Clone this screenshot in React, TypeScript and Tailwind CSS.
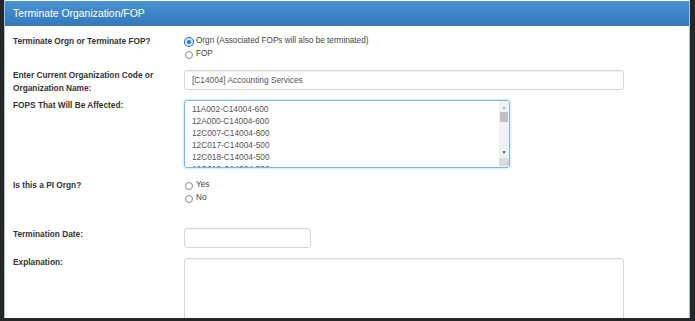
import React from "react";

const FOPS = [
  "11A002-C14004-600",
  "12A000-C14004-600",
  "12C007-C14004-600",
  "12C017-C14004-500",
  "12C018-C14004-500",
  "12C019-C14004-500",
];

function Radio({ checked, label }: { checked?: boolean; label: string }) {
  return (
    <div className="flex h-[13px] items-center gap-[3px] text-[8.2px] text-[#444]">
      {checked ? (
        <span className="box-border size-[8px] rounded-full border-[2px] border-[#d6e6f7] bg-[#1a73d9] ring-1 ring-[#1a73d9]" />
      ) : (
        <span className="box-border size-[8px] rounded-full border border-[#8a8a8a] bg-white" />
      )}
      <span>{label}</span>
    </div>
  );
}

function Label({ children, className = "" }: { children: React.ReactNode; className?: string }) {
  return (
    <div className={"w-[171px] shrink-0 text-[8.3px] font-bold leading-[13px] text-[#333] " + className}>
      {children}
    </div>
  );
}

export default function App() {
  return (
    <div
      className="flex h-[321px] w-[695px] overflow-hidden bg-[#262626] pb-[3px] pl-[4px]"
      style={{ fontFamily: '"Liberation Sans", Arial, sans-serif' }}
    >
      <div className="flex h-[318px] w-[686px] flex-col overflow-hidden border-x border-[#9cc3e6] bg-white">
        {/* header */}
        <div className="mt-[1px] flex h-[25px] shrink-0 items-center bg-gradient-to-b from-[#4a92d2] to-[#3479ba] pl-[8px] text-[10.4px] text-white">
          Terminate Organization/FOP
        </div>

        <div className="flex flex-col pl-[8px]">
          {/* row 1 */}
          <div className="mt-[9px] flex">
            <Label>Terminate Orgn or Terminate FOP?</Label>
            <div className="flex flex-col pl-[1px]">
              <Radio checked label="Orgn (Associated FOPs will also be terminated)" />
              <Radio label="FOP" />
            </div>
          </div>

          {/* row 2 */}
          <div className="mt-[8px] flex">
            <Label>
              Enter Current Organization Code or
              <br />
              Organization Name:
            </Label>
            <div className="mt-[1px] flex h-[20px] w-[440px] items-center rounded-[3px] border border-[#d6d6d6] pl-[7px] text-[8.3px] text-[#555] shadow-[inset_0_1px_1px_rgba(0,0,0,0.06)]">
              [C14004] Accounting Services
            </div>
          </div>

          {/* row 3 */}
          <div className="mt-[3px] flex">
            <Label className="pt-[1px]">FOPS That Will Be Affected:</Label>
            <div className="mt-[2px] flex h-[68px] w-[326px] overflow-hidden rounded-[3px] border border-[#7fb5e6] shadow-[0_0_3px_rgba(102,175,233,0.6)]">
              <div className="flex-1 overflow-hidden pl-[7px] pt-[2px] text-[8.3px] leading-[12px] text-[#555]">
                {FOPS.map((f) => (
                  <div key={f}>{f}</div>
                ))}
              </div>
              <div className="flex w-[10px] flex-col items-center bg-[#f1f1f1]">
                <span className="mt-[3px] text-[5px] leading-[6px] text-[#b0b0b0]">▲</span>
                <span className="mt-[2px] h-[10px] w-[8px] bg-[#c1c1c1]" />
                <span className="mt-auto text-[5px] leading-[6px] text-[#505050]">▼</span>
                <span className="mt-[3px] mb-[1px] h-[8px] w-[10px] bg-[#dcdcdc] text-right text-[6px] leading-[8px] text-[#888]">
                  ⁄
                </span>
              </div>
            </div>
          </div>

          {/* row 4 */}
          <div className="mt-[11px] flex">
            <Label>Is this a PI Orgn?</Label>
            <div className="flex flex-col pl-[1px]">
              <Radio label="Yes" />
              <Radio label="No" />
            </div>
          </div>

          {/* row 5 */}
          <div className="mt-[22px] flex">
            <Label className="pt-[1px]">Termination Date:</Label>
            <div className="mt-[1px] h-[20px] w-[127px] rounded-[3px] border border-[#d6d6d6] shadow-[inset_0_1px_1px_rgba(0,0,0,0.06)]" />
          </div>

          {/* row 6 */}
          <div className="mt-[8px] flex">
            <Label>Explanation:</Label>
            <div className="mt-[2px] h-[80px] w-[440px] rounded-[3px] border border-[#d6d6d6] shadow-[inset_0_1px_1px_rgba(0,0,0,0.06)]" />
          </div>
        </div>
      </div>
    </div>
  );
}
